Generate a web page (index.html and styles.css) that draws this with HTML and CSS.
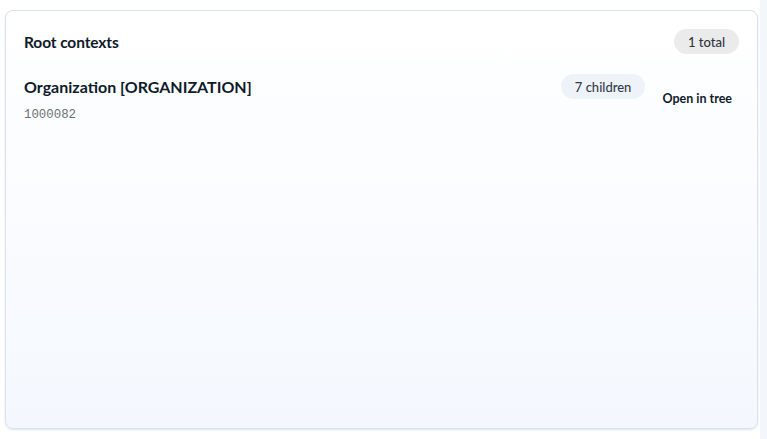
FILE: index.html
```html
<!DOCTYPE html>
<html>
<head>
<meta charset="utf-8">
<link rel="stylesheet" href="styles.css">
</head>
<body>
<div class="page">
  <main class="main">
    <section class="card">
      <header class="card-head">
        <h2 class="title">Root contexts</h2>
        <span class="pill pill-gray">1 total</span>
      </header>
      <div class="row">
        <div class="row-info">
          <div class="row-name">Organization [ORGANIZATION]</div>
          <div class="row-id">1000082</div>
        </div>
        <div class="row-actions">
          <span class="pill pill-blue">7 children</span>
          <button class="link-btn">Open in tree</button>
        </div>
      </div>
    </section>
  </main>
  <aside class="strip"></aside>
</div>
</body>
</html>
```
FILE: styles.css
```css
* { box-sizing: border-box; }
html, body { margin: 0; padding: 0; background: #fff; }
body {
  font-family: "Lato", "Inter", "Liberation Sans", sans-serif;
  color: #0f1a2b;
}
.page {
  display: flex;
  height: 439px;
}
.main {
  flex: 1;
  padding: 10px 2px 10px 5px;
  display: flex;
}
.strip {
  width: 7px;
  background: #f3f6fb;
}
.card {
  flex: 1;
  border: 1px solid #d9e3ee;
  border-radius: 8px;
  background: linear-gradient(180deg, #ffffff 0%, #f4f8fe 100%);
  box-shadow: 0 1px 2px rgba(120, 150, 190, 0.25);
  padding: 18px 18px;
}
.card-head {
  display: flex;
  justify-content: space-between;
  align-items: center;
}
.title {
  margin: 0;
  font-size: 15.5px;
  font-weight: 700;
  letter-spacing: -0.1px;
}
.pill {
  display: inline-flex;
  align-items: center;
  height: 25px;
  border-radius: 13px;
  padding: 0 14px;
  font-size: 13px;
  font-weight: 500;
}
.pill-gray {
  background: #ebebeb;
  color: #2d3440;
}
.pill-blue {
  background: #eef3fa;
  color: #333b48;
}
.row {
  margin-top: 20px;
  display: flex;
  justify-content: space-between;
  align-items: flex-start;
}
.row-name {
  font-size: 16px;
  font-weight: 700;
  margin-top: 3px;
  letter-spacing: 0;
}
.row-id {
  margin-top: 12px;
  font-family: "Liberation Mono", "DejaVu Sans Mono", monospace;
  font-size: 12.4px;
  color: #6b6f76;
}
.row-actions {
  display: flex;
  align-items: flex-start;
  gap: 10px;
}
.link-btn {
  margin-top: 17px;
  border: none;
  background: transparent;
  font-family: inherit;
  font-size: 12.5px;
  font-weight: 700;
  color: #0f1a2b;
  padding: 0 7px;
  cursor: pointer;
}
```
